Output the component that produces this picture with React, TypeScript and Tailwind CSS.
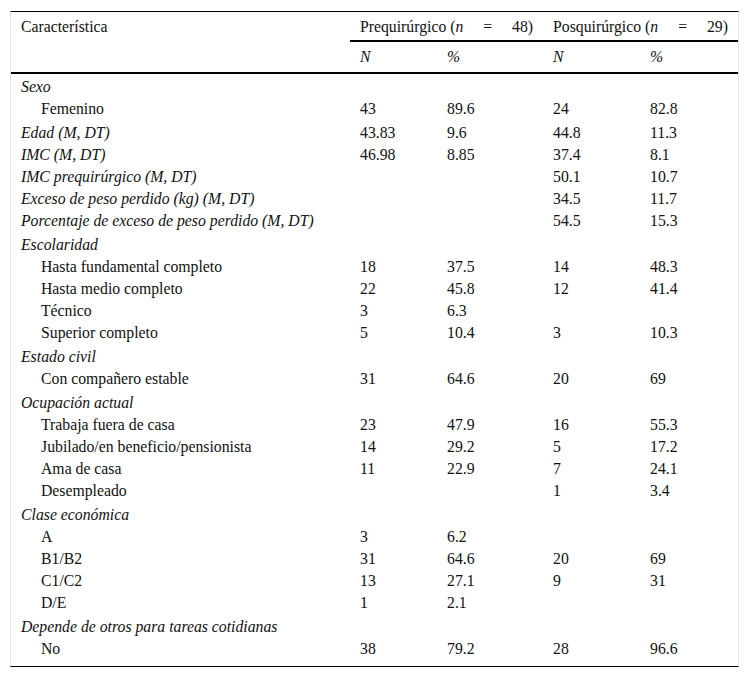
type Row = {
  label: string;
  italic?: boolean;
  sub?: boolean;
  tall?: boolean;
  v?: [string, string, string, string];
};

const rows: Row[] = [
  { label: "Sexo", italic: true },
  { label: "Femenino", sub: true, v: ["43", "89.6", "24", "82.8"] },
  { label: "Edad (M, DT)", italic: true, tall: true, v: ["43.83", "9.6", "44.8", "11.3"] },
  { label: "IMC (M, DT)", italic: true, v: ["46.98", "8.85", "37.4", "8.1"] },
  { label: "IMC prequirúrgico (M, DT)", italic: true, v: ["", "", "50.1", "10.7"] },
  { label: "Exceso de peso perdido (kg) (M, DT)", italic: true, v: ["", "", "34.5", "11.7"] },
  { label: "Porcentaje de exceso de peso perdido (M, DT)", italic: true, v: ["", "", "54.5", "15.3"] },
  { label: "Escolaridad", italic: true, tall: true },
  { label: "Hasta fundamental completo", sub: true, v: ["18", "37.5", "14", "48.3"] },
  { label: "Hasta medio completo", sub: true, v: ["22", "45.8", "12", "41.4"] },
  { label: "Técnico", sub: true, v: ["3", "6.3", "", ""] },
  { label: "Superior completo", sub: true, v: ["5", "10.4", "3", "10.3"] },
  { label: "Estado civil", italic: true, tall: true },
  { label: "Con compañero estable", sub: true, v: ["31", "64.6", "20", "69"] },
  { label: "Ocupación actual", italic: true, tall: true },
  { label: "Trabaja fuera de casa", sub: true, v: ["23", "47.9", "16", "55.3"] },
  { label: "Jubilado/en beneficio/pensionista", sub: true, v: ["14", "29.2", "5", "17.2"] },
  { label: "Ama de casa", sub: true, v: ["11", "22.9", "7", "24.1"] },
  { label: "Desempleado", sub: true, v: ["", "", "1", "3.4"] },
  { label: "Clase económica", italic: true, tall: true },
  { label: "A", sub: true, v: ["3", "6.2", "", ""] },
  { label: "B1/B2", sub: true, v: ["31", "64.6", "20", "69"] },
  { label: "C1/C2", sub: true, v: ["13", "27.1", "9", "31"] },
  { label: "D/E", sub: true, v: ["1", "2.1", "", ""] },
  { label: "Depende de otros para tareas cotidianas", italic: true, tall: true },
  { label: "No", sub: true, v: ["38", "79.2", "28", "96.6"] },
];

const cols = "grid grid-cols-[339px_87px_106px_97px_98px]";

function BodyRow({ row }: { row: Row }) {
  return (
    <div
      className={`${cols} items-end ${row.tall ? "h-[24px]" : "h-[22px]"}`}
    >
      <div
        className={`h-[22px] leading-[22px] ${row.sub ? "pl-[30px]" : "pl-[10px]"} ${
          row.italic ? "italic" : ""
        }`}
      >
        {row.label}
      </div>
      {(row.v ?? ["", "", "", ""]).map((val, i) => (
        <div key={i} className="h-[22px] pl-[10px] leading-[22px]">
          {val}
        </div>
      ))}
    </div>
  );
}

function GroupHead({ label, n }: { label: string; n: string }) {
  return (
    <div className="flex items-center justify-between px-[10px]">
      <span>
        {label} (<i>n</i>
      </span>
      <span>=</span>
      <span>{n})</span>
    </div>
  );
}

export default function App() {
  return (
    <div className="min-h-[677px] bg-white pl-[10px] pt-[11px]">
      <div className="w-[729px] border-x border-b border-t border-x-[#e4e4e4] border-b-black border-t-black pb-[6px] font-['Liberation_Serif','Times_New_Roman',serif] text-[15.75px] text-[#111]">
        <div className="flex border-b-2 border-black">
          <div className="w-[339px] pl-[10px] leading-[30px]">Característica</div>
          <div className="flex-1">
            <div className="grid h-[30px] grid-cols-[193px_195px] border-b-2 border-black leading-[30px]">
              <GroupHead label="Prequirúrgico" n="48" />
              <GroupHead label="Posquirúrgico" n="29" />
            </div>
            <div className="grid h-[30px] grid-cols-[87px_106px_97px_98px] italic leading-[30px]">
              <div className="pl-[10px]">N</div>
              <div className="pl-[10px]">%</div>
              <div className="pl-[10px]">N</div>
              <div className="pl-[10px]">%</div>
            </div>
          </div>
        </div>
        <div className="pt-[2px]">
          {rows.map((r, i) => (
            <BodyRow key={i} row={r} />
          ))}
        </div>
      </div>
    </div>
  );
}
